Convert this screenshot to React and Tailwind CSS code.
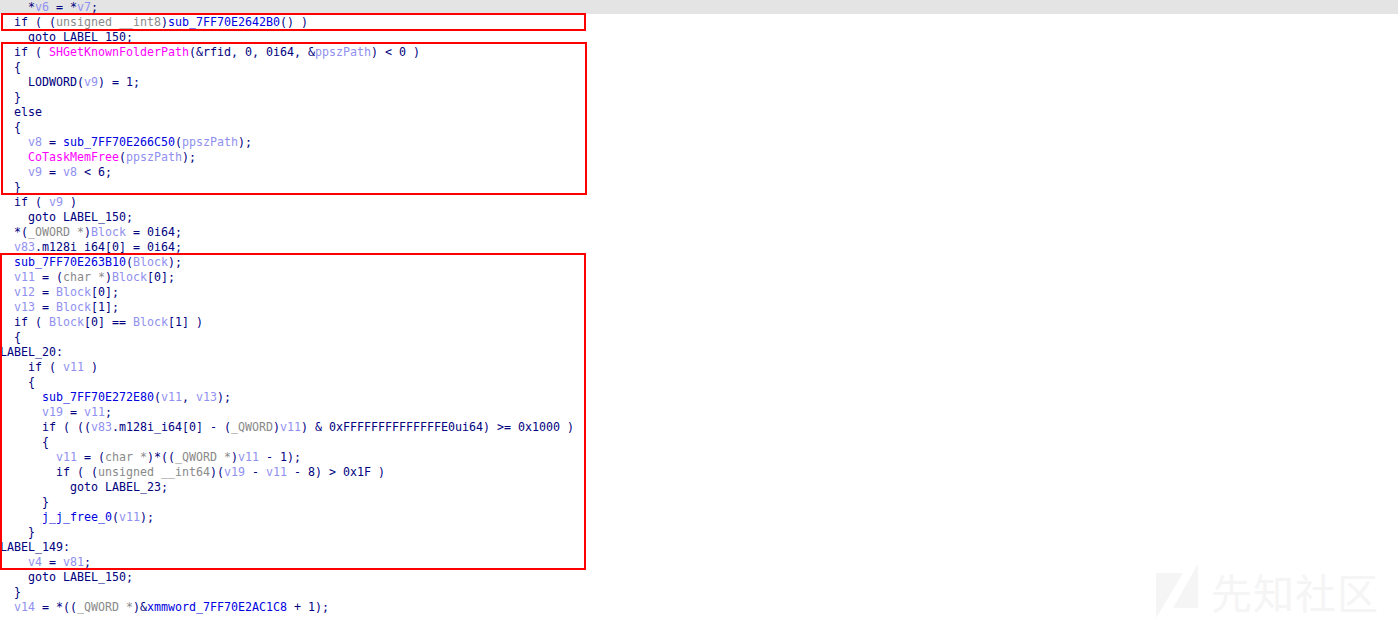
const LINES = [
  "    *{v6} = *{v7};",
  "  if ( ([unsigned __int8])<sub_7FF70E2642B0>() )",
  "    goto LABEL_150;",
  "  if ( !SHGetKnownFolderPath!(&rfid, 0, 0i64, &{ppszPath}) < 0 )",
  "  {",
  "    LODWORD({v9}) = 1;",
  "  }",
  "  else",
  "  {",
  "    {v8} = <sub_7FF70E266C50>({ppszPath});",
  "    !CoTaskMemFree!({ppszPath});",
  "    {v9} = {v8} < 6;",
  "  }",
  "  if ( {v9} )",
  "    goto LABEL_150;",
  "  *([_OWORD *]){Block} = 0i64;",
  "  {v83}.m128i_i64[0] = 0i64;",
  "  <sub_7FF70E263B10>({Block});",
  "  {v11} = ([char *]){Block}[0];",
  "  {v12} = {Block}[0];",
  "  {v13} = {Block}[1];",
  "  if ( {Block}[0] == {Block}[1] )",
  "  {",
  "LABEL_20:",
  "    if ( {v11} )",
  "    {",
  "      <sub_7FF70E272E80>({v11}, {v13});",
  "      {v19} = {v11};",
  "      if ( (({v83}.m128i_i64[0] - ([_QWORD]){v11}) & 0xFFFFFFFFFFFFFFE0ui64) >= 0x1000 )",
  "      {",
  "        {v11} = ([char *])*(([_QWORD *]){v11} - 1);",
  "        if ( ([unsigned __int64])({v19} - {v11} - 8) > 0x1F )",
  "          goto LABEL_23;",
  "      }",
  "      <j_j_free_0>({v11});",
  "    }",
  "LABEL_149:",
  "    {v4} = {v81};",
  "    goto LABEL_150;",
  "  }",
  "  {v14} = *(([_QWORD *])&<xmmword_7FF70E2AC1C8> + 1);",
];

const TOKEN_COLORS = {
  "{": "text-[#9090f0]",
  "[": "text-[#8a8a8a]",
  "<": "text-[#0000e0]",
  "!": "text-[#ff00ff]",
};
const CLOSERS = { "{": "}", "[": "]", "<": ">", "!": "!" };

// small markup: {var} [type] <func> !import!
function parseLine(line) {
  const parts = [];
  const re = /\{[^}]+\}|\[(?:unsigned|char|_OWORD|_QWORD)[^\]]*\]|<[a-zA-Z_][^>]*>|![^!]+!/g;
  let last = 0;
  let m;
  while ((m = re.exec(line))) {
    if (m.index > last) parts.push({ text: line.slice(last, m.index) });
    const open = m[0][0];
    if (CLOSERS[open]) parts.push({ text: m[0].slice(1, -1), color: TOKEN_COLORS[open] });
    last = m.index + m[0].length;
  }
  if (last < line.length) parts.push({ text: line.slice(last) });
  return parts;
}

function CodeLine({ line, first }) {
  return (
    <div className={first ? "h-[14px] leading-[14px] bg-[#e4e4e4] whitespace-pre" : "h-[15px] leading-[17px] whitespace-pre"}>
      {parseLine(line).map((part, i) => (
        <span key={i} className={part.color}>
          {part.text}
        </span>
      ))}
    </div>
  );
}

function Watermark() {
  return (
    <div className="absolute right-[19px] bottom-[4px] flex items-center gap-[12px] text-[#f5f5f5]">
      <svg width="43" height="54" viewBox="0 0 43 54" fill="#f5f5f5">
        <path d="M0 9H27L0 54Z" />
        <path d="M42 0V44H17Z" />
      </svg>
      <span className="text-[41px] leading-none tracking-[1px] font-['Noto_Sans_CJK_SC',sans-serif]">先知社区</span>
    </div>
  );
}

export default function App() {
  return (
    <div className="relative h-[622px] w-[1398px] overflow-hidden bg-white font-['DejaVu_Sans_Mono',monospace] text-[11.63px] text-[#000080]">
      {LINES.map((line, i) => (
        <CodeLine key={i} line={line} first={i === 0} />
      ))}

      {/* red annotation boxes */}
      <div className="absolute left-[1px] top-[13px] h-[18px] w-[585px] border-2 border-[#ff0000]" />
      <div className="absolute left-[1px] top-[42px] h-[153px] w-[586px] border-2 border-[#ff0000]" />
      <div className="absolute left-0 top-[253px] h-[317px] w-[586px] border-2 border-[#ff0000]" />

      <Watermark />
    </div>
  );
}
